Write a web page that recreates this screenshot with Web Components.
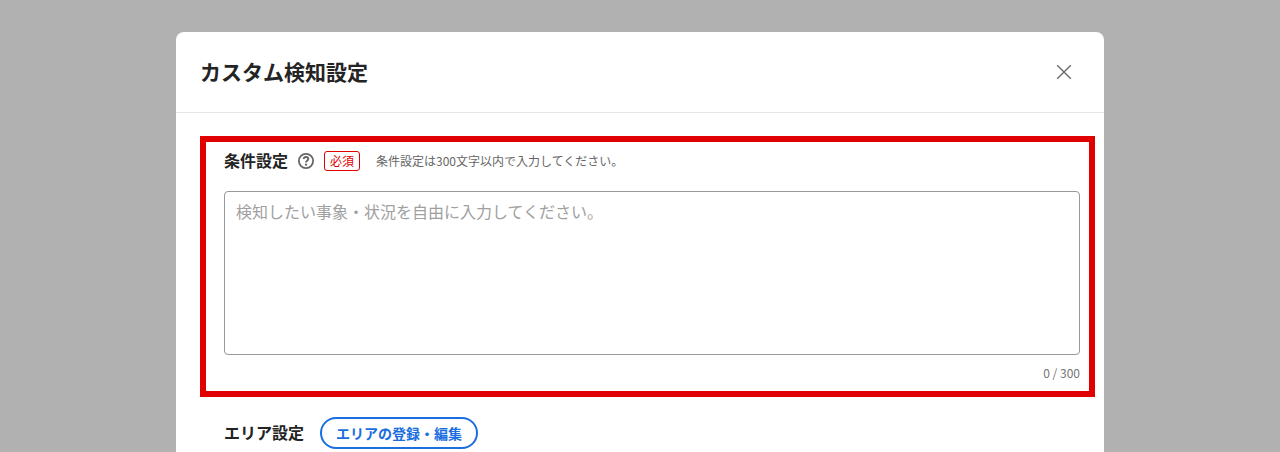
<!DOCTYPE html>
<html lang="ja">
<head>
<meta charset="utf-8">
<title>カスタム検知設定</title>
<style>
  html, body { margin: 0; height: 100%; overflow: hidden; background: #b1b1b1; }
  body { font-family: "Noto Sans CJK JP", "Noto Sans", sans-serif; color: #242424; }
</style>
</head>
<body>
<custom-modal heading="カスタム検知設定">
  <condition-field label="条件設定" note="条件設定は300文字以内で入力してください。" placeholder="検知したい事象・状況を自由に入力してください。" max="300"></condition-field>
  <area-field label="エリア設定" action="エリアの登録・編集"></area-field>
</custom-modal>

<script>
class customModal extends HTMLElement {
  constructor () {
    super()
    this.shadow = this.attachShadow({ mode: 'open' })
  }

  connectedCallback () {
    this.shadow.innerHTML =
      /* html */`
        <style>
          :host{
            display: block;
            width: 928px;
            height: 420px;
            margin: 32px auto 0;
            background: #fff;
            border-radius: 8px 8px 0 0;
          }
          header{
            display: flex;
            align-items: center;
            justify-content: space-between;
            height: 80px;
            padding: 0 24px;
            border-bottom: 1px solid #e6e6e6;
          }
          h1{
            margin: 0;
            padding-bottom: 2px;
            font-size: 21px;
            line-height: 28px;
            font-weight: 700;
            color: #242424;
          }
          button{
            display: flex;
            padding: 0;
            border: 0;
            background: none;
          }
          main{
            padding: 23px 9px 0 24px;
          }
        </style>
        <header>
          <h1>${this.getAttribute('heading')}</h1>
          <button aria-label="閉じる">
            <svg width="32" height="32" viewBox="0 0 32 32" fill="none" stroke="#707070" stroke-width="1.5">
              <path d="M9.2 9.2 22.8 22.8M22.8 9.2 9.2 22.8"/>
            </svg>
          </button>
        </header>
        <main><slot></slot></main>
      `
  }
}

class conditionField extends HTMLElement {
  constructor () {
    super()
    this.shadow = this.attachShadow({ mode: 'open' })
  }

  connectedCallback () {
    const max = this.getAttribute('max')
    this.shadow.innerHTML =
      /* html */`
        <style>
          :host{
            display: block;
            box-sizing: border-box;
            width: 895px;
            height: 261px;
            padding: 9px 9px 0 18px;
            border: 6px solid #e00000;
          }
          .title{
            display: flex;
            align-items: center;
            height: 20px;
          }
          .label{
            padding-bottom: 2px;
            font-size: 16px;
            line-height: 20px;
            font-weight: 700;
            color: #242424;
          }
          svg{
            margin-left: 8px;
          }
          .required{
            box-sizing: border-box;
            width: 36px;
            height: 20px;
            margin-left: 8px;
            border: 1px solid #e00000;
            border-radius: 3px;
            font-size: 12px;
            line-height: 18px;
            text-align: center;
            color: #e00000;
          }
          .note{
            margin-left: 16px;
            font-size: 12px;
            line-height: 20px;
            color: #666;
          }
          .box{
            box-sizing: border-box;
            height: 164px;
            margin-top: 20px;
            padding: 7px 11px;
            border: 1px solid #999;
            border-radius: 4px;
            font-size: 16px;
            line-height: 24px;
            color: #a0a0a0;
          }
          .count{
            margin-top: 8px;
            font-size: 12px;
            line-height: 20px;
            text-align: right;
            color: #757575;
          }
        </style>
        <div class="title">
          <span class="label">${this.getAttribute('label')}</span>
          <svg width="20" height="20" viewBox="0 0 20 20" fill="none">
            <circle cx="10" cy="10" r="7.1" stroke="#666" stroke-width="1.8"/>
            <path d="M7.7 8.1c0-1.3 1-2.1 2.3-2.1s2.3.8 2.3 2c0 1.8-2.3 1.7-2.3 3.5" stroke="#666" stroke-width="1.9"/>
            <circle cx="10" cy="13.7" r="1.15" fill="#666"/>
          </svg>
          <span class="required">必須</span>
          <span class="note">${this.getAttribute('note')}</span>
        </div>
        <div class="box">${this.getAttribute('placeholder')}</div>
        <div class="count">0 / ${max}</div>
      `
  }
}

class areaField extends HTMLElement {
  constructor () {
    super()
    this.shadow = this.attachShadow({ mode: 'open' })
  }

  connectedCallback () {
    this.shadow.innerHTML =
      /* html */`
        <style>
          :host{
            display: flex;
            align-items: center;
            gap: 16px;
            margin-top: 20px;
            padding-left: 24px;
          }
          .label{
            padding-bottom: 2px;
            font-size: 16px;
            line-height: 28px;
            font-weight: 700;
            color: #242424;
          }
          a{
            box-sizing: border-box;
            height: 32px;
            padding: 0 14px;
            border: 2px solid #1a6ee0;
            border-radius: 16px;
            font-size: 14px;
            line-height: 28px;
            font-weight: 700;
            color: #1a6ee0;
          }
        </style>
        <span class="label">${this.getAttribute('label')}</span>
        <a>${this.getAttribute('action')}</a>
      `
  }
}

customElements.define('custom-modal', customModal)
customElements.define('condition-field', conditionField)
customElements.define('area-field', areaField)
</script>
</body>
</html>
